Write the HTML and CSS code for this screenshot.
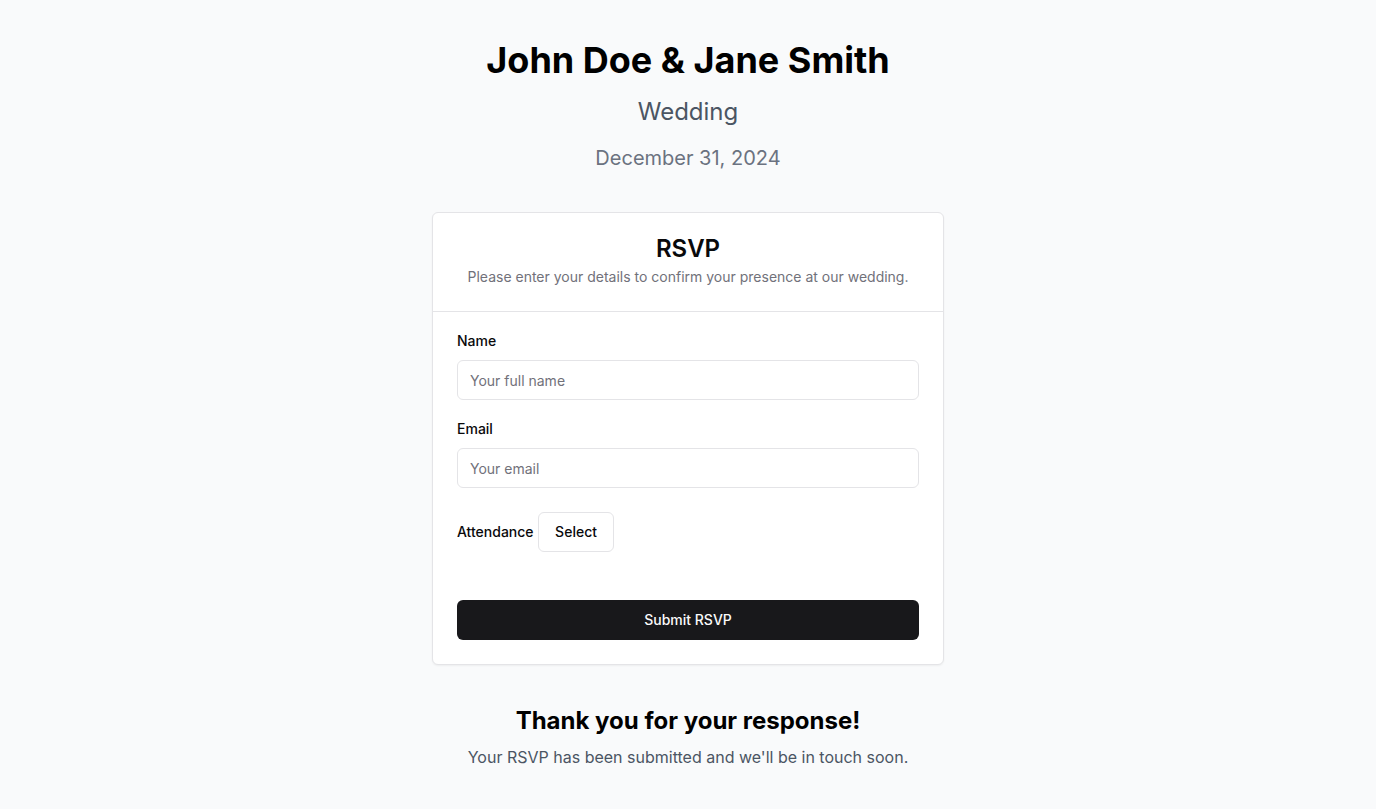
FILE: index.html
```html
<!DOCTYPE html>
<html lang="en">
<head>
<meta charset="utf-8">
<meta name="viewport" content="width=device-width, initial-scale=1">
<title>John Doe &amp; Jane Smith – RSVP</title>
<link rel="stylesheet" href="styles.css">
</head>
<body>
<main class="page">
  <header class="intro">
    <h1 class="couple">John Doe &amp; Jane Smith</h1>
    <p class="event">Wedding</p>
    <p class="date">December 31, 2024</p>
  </header>
  <section class="card">
    <div class="card-header">
      <h2 class="card-title">RSVP</h2>
      <p class="card-description">Please enter your details to confirm your presence at our wedding.</p>
    </div>
    <form class="card-body">
      <div class="field">
        <label class="label" for="name">Name</label>
        <input class="input" id="name" type="text" placeholder="Your full name">
      </div>
      <div class="field">
        <label class="label" for="email">Email</label>
        <input class="input" id="email" type="email" placeholder="Your email">
      </div>
      <div class="attendance">
        <label class="label" for="attendance">Attendance</label>
        <button class="button button-outline" id="attendance" type="button">Select</button>
      </div>
      <button class="button button-primary" type="submit">Submit RSVP</button>
    </form>
  </section>
  <footer class="thanks">
    <h2 class="thanks-title">Thank you for your response!</h2>
    <p class="thanks-text">Your RSVP has been submitted and we'll be in touch soon.</p>
  </footer>
</main>
</body>
</html>
```
FILE: styles.css
```css
*, *::before, *::after { box-sizing: border-box; }
body {
  margin: 0;
  background: #f9fafb;
  color: #000;
  font-family: Inter, "Liberation Sans", sans-serif;
  font-size: 16px;
  line-height: 24px;
}
h1, h2, p { margin: 0; }
.page {
  display: flex;
  flex-direction: column;
  align-items: center;
  justify-content: center;
  min-height: 100vh;
  padding: 40px 16px;
}
.intro, .thanks { text-align: center; }
.couple { font-size: 36px; line-height: 40px; font-weight: 700; }
.event { margin-top: 16px; font-size: 24px; line-height: 32px; color: #4b5563; }
.date { margin-top: 16px; font-size: 20px; line-height: 28px; color: #6b7280; }
.card {
  width: 100%;
  max-width: 512px;
  margin: 40px 0;
  border: 1px solid #e4e4e7;
  border-radius: 6px;
  background: #fff;
  color: #09090b;
  box-shadow: 0 1px 2px rgba(0, 0, 0, 0.05);
}
.card-header {
  padding: 24px;
  border-bottom: 1px solid #e4e4e7;
  text-align: center;
}
.card-title { font-size: 24px; line-height: 24px; font-weight: 600; }
.card-description { margin-top: 6px; font-size: 14px; line-height: 20px; color: #71717a; }
.card-body { display: flex; flex-direction: column; gap: 16px; padding: 16px 24px 24px; }
.label { font-size: 14px; line-height: 14px; font-weight: 500; }
.input {
  display: block;
  width: 100%;
  height: 40px;
  margin-top: 8px;
  padding: 8px 12px;
  border: 1px solid #e4e4e7;
  border-radius: 6px;
  background: #fff;
  color: inherit;
  font: inherit;
  font-size: 14px;
}
.input::placeholder { color: #71717a; opacity: 1; }
.button {
  height: 40px;
  padding: 8px 16px;
  border-radius: 6px;
  font-family: inherit;
  font-size: 14px;
  line-height: 20px;
  font-weight: 500;
  cursor: pointer;
}
.button-outline { border: 1px solid #e4e4e7; background: #fff; color: #09090b; }
.button-primary { border: 0; background: #18181b; color: #fafafa; }
.attendance { padding: 8px 0 32px; }
.thanks-title { font-size: 24px; line-height: 32px; font-weight: 700; }
.thanks-text { margin-top: 8px; color: #4b5563; }
```
